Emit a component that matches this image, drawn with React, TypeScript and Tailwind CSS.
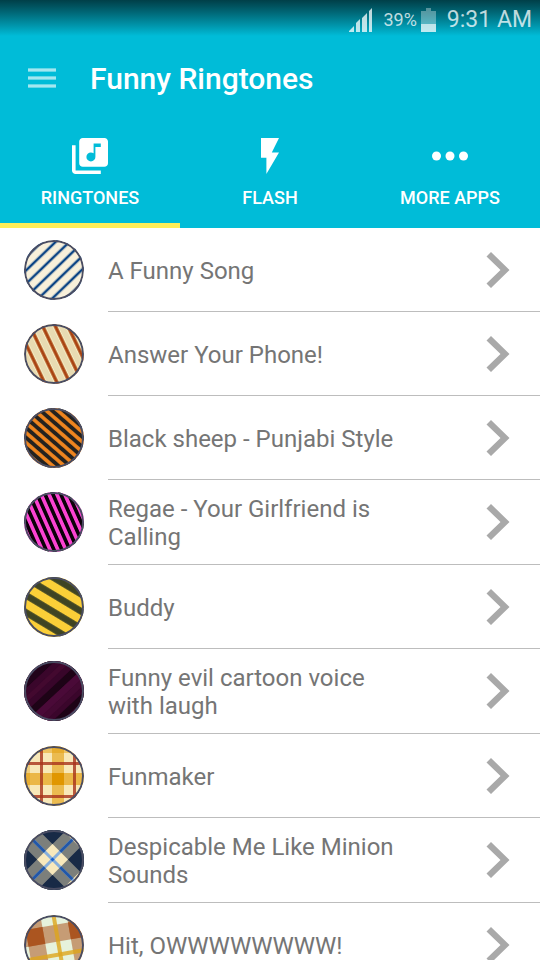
import type { ReactNode } from "react";
import clsx from "clsx";
import { MdFlashOn, MdLibraryMusic } from "react-icons/md";

interface StripesProps {
  id: string;
  base: string;
  color: string;
  angle: number;
  gap: number;
  width: number;
  phase: number;
  edge?: string;
}

const Stripes = ({ id, base, color, angle, gap, width, phase, edge }: StripesProps) => (
  <>
    <defs>
      <pattern
        id={id}
        width={gap}
        height={gap}
        patternUnits="userSpaceOnUse"
        patternTransform={`rotate(${angle}) translate(${phase - gap / 2} 0)`}
      >
        <rect width={gap} height={gap} fill={base} />
        {edge && <rect x={gap / 2 - width / 2 - 1} width={width + 2} height={gap} fill={edge} />}
        <rect x={gap / 2 - width / 2} width={width} height={gap} fill={color} />
      </pattern>
    </defs>
    <rect width="60" height="60" fill={`url(#${id})`} />
  </>
);

const Purple = () => (
  <>
    <rect width="60" height="60" fill="#3a062b" />
    <g transform="rotate(-43 30 30)">
      <rect x="-15" y="2" width="90" height="7" fill="#21031a" />
      <rect x="-15" y="9" width="90" height="6" fill="#3a062b" />
      <rect x="-15" y="15" width="90" height="5" fill="#43092f" />
      <rect x="-15" y="20" width="90" height="6" fill="#38062a" />
      <rect x="-15" y="26" width="90" height="7" fill="#1d0316" />
      <rect x="-15" y="33" width="90" height="7" fill="#4a0a38" />
      <rect x="-15" y="40" width="90" height="6" fill="#430932" />
      <rect x="-15" y="46" width="90" height="5" fill="#3a062b" />
      <rect x="-15" y="51" width="90" height="6" fill="#1d0316" />
    </g>
  </>
);

const OrangePlaid = () => (
  <>
    <rect width="60" height="60" fill="#f8e8b8" />
    <g fill="#e39c0a">
      <rect y="27" width="60" height="12" fillOpacity="0.65" />
      <rect y="-6" width="60" height="13" fillOpacity="0.5" />
      <rect x="28" width="12" height="60" fillOpacity="0.6" />
      <rect x="-5" width="11" height="60" fillOpacity="0.35" />
    </g>
    <rect x="28" y="27" width="12" height="12" fill="#e09600" />
    <g fill="#a8321c" fillOpacity="0.8">
      <rect x="16" width="3" height="60" />
      <rect x="49" width="3" height="60" />
      <rect y="16" width="60" height="3" />
      <rect y="49" width="60" height="3" />
    </g>
  </>
);

const NavyPlaid = () => (
  <>
    <rect width="60" height="60" fill="#f8e8bc" />
    <g transform="translate(28.5 29.5) rotate(45)">
      <g fill="#1a2c4a" fillOpacity="0.56">
        <rect x="-28" y="-50" width="17" height="100" />
        <rect x="11" y="-50" width="17" height="100" />
        <rect x="-50" y="-28" width="100" height="17" />
        <rect x="-50" y="11" width="100" height="17" />
      </g>
      <g fill="#182a46">
        <rect x="-28" y="-28" width="17" height="17" />
        <rect x="11" y="-28" width="17" height="17" />
        <rect x="-28" y="11" width="17" height="17" />
        <rect x="11" y="11" width="17" height="17" />
      </g>
      <g fill="#86aedc">
        <rect x="-1.5" y="-50" width="3" height="100" />
        <rect x="-50" y="-1.5" width="100" height="3" />
      </g>
      <g fill="#2257a8">
        <rect x="-1.5" y="-28" width="3" height="17" />
        <rect x="-1.5" y="11" width="3" height="17" />
        <rect x="-28" y="-1.5" width="17" height="3" />
        <rect x="11" y="-1.5" width="17" height="3" />
        <rect x="-1.5" y="-1.5" width="3" height="3" fill="#1560d0" />
      </g>
    </g>
  </>
);

const BrownPlaid = () => (
  <>
    <rect width="60" height="60" fill="#e6f2dc" />
    <g transform="rotate(-10)">
      <g fill="#ab5520" fillOpacity="0.55">
        <rect x="-1" y="-20" width="17" height="100" />
        <rect x="42" y="-20" width="17" height="100" />
        <rect x="-20" y="15" width="100" height="17" />
      </g>
      <rect x="-1" y="15" width="17" height="17" fill="#ab5520" />
      <rect x="42" y="15" width="17" height="17" fill="#ab5520" />
      <g fill="#dda51c" fillOpacity="0.8">
        <rect x="27" y="-20" width="4" height="100" />
        <rect x="-20" y="43" width="100" height="4" />
      </g>
    </g>
  </>
);

const ringtones: { title: string; art: ReactNode }[] = [
  {
    title: "A Funny Song",
    art: <Stripes id="blue" base="#f8f0da" color="#0a4384" angle={46} gap={9.6} width={2.5} phase={4.1} />,
  },
  {
    title: "Answer Your Phone!",
    art: <Stripes id="rust" base="#e8dbb2" color="#a9420f" edge="#f8f2c8" angle={-25.6} gap={11.4} width={3.3} phase={4.5} />,
  },
  {
    title: "Black sheep - Punjabi Style",
    art: <Stripes id="orange" base="#24221f" color="#f0851f" angle={-49} gap={7.5} width={3.6} phase={5.2} />,
  },
  {
    title: "Regae - Your Girlfriend is Calling",
    art: <Stripes id="pink" base="#0c0009" color="#fb42d2" angle={-24} gap={7.2} width={3.6} phase={0.3} />,
  },
  {
    title: "Buddy",
    art: <Stripes id="olive" base="#fbcf38" color="#3f4423" angle={-59} gap={14.7} width={6.6} phase={0} />,
  },
  { title: "Funny evil cartoon voice with laugh", art: <Purple /> },
  { title: "Funmaker", art: <OrangePlaid /> },
  { title: "Despicable Me Like Minion Sounds", art: <NavyPlaid /> },
  { title: "Hit, OWWWWWWWW!", art: <BrownPlaid /> },
];

const tabs = [
  { label: "RINGTONES", icon: <MdLibraryMusic viewBox="2 2 20 20" className="size-9" /> },
  { label: "FLASH", icon: <MdFlashOn viewBox="2 2 20 20" className="size-9" /> },
  {
    label: "MORE APPS",
    icon: (
      <svg viewBox="0 0 36 36" className="size-9 fill-current">
        <circle cx="4.5" cy="18" r="4.5" />
        <circle cx="18" cy="18" r="4.5" />
        <circle cx="31.5" cy="18" r="4.5" />
      </svg>
    ),
  },
];

const StatusBar = () => (
  <div className="flex h-10 items-center justify-end bg-linear-to-b from-[#003f48] to-[#00bcd8] to-90% pr-2 text-white/75">
    <svg viewBox="0 0 24 24" className="mr-2.5 size-6 fill-current" aria-hidden="true">
      <path d="M0 24v-1l5-5v6zM7 24V15l4-4v13zM13 24V10l5-5v19zM20 24V3l3-3v24z" />
    </svg>
    <span className="mr-1 text-lg">39%</span>
    <svg viewBox="0 0 16 24" className="mr-2.5 h-6 w-4 fill-current" aria-hidden="true">
      <path d="M5 0h5v3h5v13H0V3h5z" fillOpacity="0.45" />
      <path d="M0 16h15v8H0z" />
    </svg>
    <span className="text-[23px]">9:31 AM</span>
  </div>
);

const Row = ({ title, art }: { title: string; art: ReactNode }) => (
  <li>
    <button type="button" className="flex w-full items-stretch pl-6 text-left">
      <svg viewBox="0 0 60 60" className="mt-3 mr-6 size-15 shrink-0 rounded-full" aria-hidden="true">
        {art}
        <circle cx="30" cy="30" r="29" fill="none" stroke="#4a4d63" strokeWidth="2" />
      </svg>
      <span className="flex min-h-21 flex-1 items-center border-b border-[#bdbdbd] py-[13px] pr-[30px]">
        <span className="flex-1 pt-0.5 text-2xl/7 text-[#757575]">{title}</span>
        <svg viewBox="0 0 24 36" className="ml-20 h-9 w-6 shrink-0 fill-[#a9a9a9]" aria-hidden="true">
          <path d="M.5 4.5 5 0l18.5 18L5 36 .5 31.5 14.5 18z" />
        </svg>
      </span>
    </button>
  </li>
);

export default function App() {
  return (
    <div className="flex h-screen flex-col bg-white font-[Roboto,sans-serif]">
      <header className="shrink-0 bg-[#00bcd8] text-white">
        <StatusBar />
        <div className="flex h-[78px] items-center pl-7">
          <button type="button" aria-label="Menu" className="mr-[34px] pb-0.5">
            <svg viewBox="0 0 28 20" className="h-5 w-7 fill-white">
              <path d="M0 0h28v4H0zM0 8h28v4H0zM0 16h28v4H0z" fillOpacity="0.4" />
              <path d="M0 1h28v2H0zM0 9h28v2H0zM0 17h28v2H0z" fillOpacity="0.4" />
            </svg>
          </button>
          <h1 className="text-3xl font-medium">Funny Ringtones</h1>
        </div>
        <nav className="grid grid-cols-3">
          {tabs.map(({ label, icon }, index) => (
            <button
              key={label}
              type="button"
              className={clsx(
                "flex h-[110px] flex-col items-center border-b-5 pt-5",
                index === 0 ? "border-[#ffee58]" : "border-transparent",
              )}
            >
              {icon}
              <span className="mt-2.5 text-lg font-medium">{label}</span>
            </button>
          ))}
        </nav>
      </header>
      <ul className="flex-1 overflow-y-auto [scrollbar-width:none]">
        {ringtones.map((tone) => (
          <Row key={tone.title} {...tone} />
        ))}
      </ul>
    </div>
  );
}
